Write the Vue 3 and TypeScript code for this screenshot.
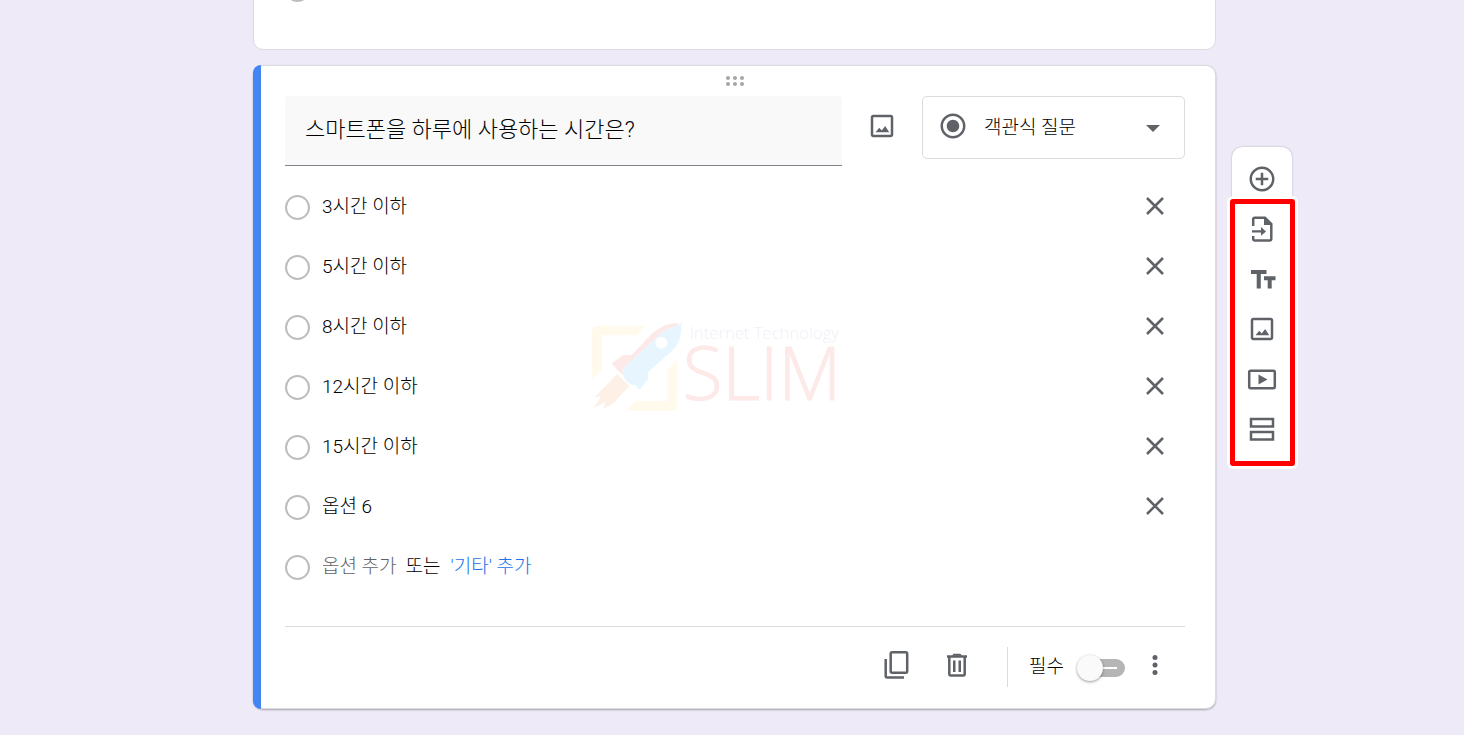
<script setup lang="ts">
import { ref } from 'vue'

interface Option {
  id: number
  text: string
}

const question = ref('스마트폰을 하루에 사용하는 시간은?')
const kind = ref('객관식 질문')
const required = ref(false)
const options = ref<Option[]>([
  { id: 1, text: '3시간 이하' },
  { id: 2, text: '5시간 이하' },
  { id: 3, text: '8시간 이하' },
  { id: 4, text: '12시간 이하' },
  { id: 5, text: '15시간 이하' },
  { id: 6, text: '옵션 6' },
])

function removeOption(id: number): void {
  options.value = options.value.filter((o) => o.id !== id)
}

function addOption(): void {
  const next = Math.max(0, ...options.value.map((o) => o.id)) + 1
  options.value.push({ id: next, text: `옵션 ${next}` })
}
</script>

<template>
  <div class="page">
    <main class="column">
      <section class="card previous">
        <div class="option"><span class="circle"></span></div>
      </section>

      <section class="card active">
        <div class="handle">
          <svg width="20" height="12" viewBox="0 0 20 12">
            <g fill="#a5a6ab">
              <circle cx="3" cy="3" r="2" /><circle cx="10" cy="3" r="2" /><circle cx="17" cy="3" r="2" />
              <circle cx="3" cy="9" r="2" /><circle cx="10" cy="9" r="2" /><circle cx="17" cy="9" r="2" />
            </g>
          </svg>
        </div>

        <div class="head">
          <input v-model="question" class="question" type="text" aria-label="질문" />
          <button class="icon image" type="button" aria-label="이미지 추가">
            <svg width="30" height="30" viewBox="0 0 24 24">
              <path d="M19 5v14H5V5h14m0-2H5c-1.100 0-2 .9-2 2v14c0 1.100.9 2 2 2h14c1.100 0 2-.9 2-2V5c0-1.100-.9-2-2-2zM14.500 12l-2.700 3.500L9.800 13.300 6.800 17h11z" />
            </svg>
          </button>
          <div class="kind">
            <svg class="kind-icon" width="30" height="30" viewBox="0 0 24 24">
              <path d="M12 7c-2.760 0-5 2.240-5 5s2.240 5 5 5 5-2.240 5-5-2.240-5-5-5zm0-5C6.480 2 2 6.480 2 12s4.480 10 10 10 10-4.480 10-10S17.520 2 12 2zm0 18c-4.420 0-8-3.580-8-8s3.580-8 8-8 8 3.580 8 8-3.580 8-8 8z" />
            </svg>
            <select v-model="kind" aria-label="질문 유형">
              <option>객관식 질문</option>
            </select>
            <svg class="kind-arrow" width="14" height="7" viewBox="0 0 14 7"><path d="M0 0h14L7 7z" /></svg>
          </div>
        </div>

        <div class="options">
          <div v-for="o in options" :key="o.id" class="option">
            <span class="circle"></span>
            <input v-model="o.text" class="answer" type="text" :aria-label="`옵션 ${o.id}`" />
            <button class="icon remove" type="button" aria-label="삭제" @click="removeOption(o.id)">
              <svg width="30" height="30" viewBox="0 0 30 30">
                <path class="line" d="M7 7l16 16M23 7L7 23" />
              </svg>
            </button>
          </div>
          <div class="option">
            <span class="circle"></span>
            <button class="add" type="button" @click="addOption">옵션 추가</button>
            <span class="or">또는</span>
            <button class="add other" type="button">'기타' 추가</button>
          </div>
        </div>

        <footer class="footer">
          <button class="icon" type="button" aria-label="복사">
            <svg width="30" height="30" viewBox="0 0 30 30">
              <rect class="line" x="8.700" y="2.200" width="16.500" height="20.500" rx="1.500" />
              <path class="line" d="M3.700 9v17a1.500 1.500 0 0 0 1.500 1.500H22" />
            </svg>
          </button>
          <button class="icon" type="button" aria-label="삭제">
            <svg width="30" height="30" viewBox="0 0 30 30">
              <path class="line" d="M5 6.500h20M7.300 7v17a1.500 1.500 0 0 0 1.500 1.500h12.400a1.500 1.500 0 0 0 1.500-1.500V7" />
              <path d="M11.500 3.800h7l1.500 2h-10zM11 10.500h2.500v11.500H11zM16.500 10.500H19v11.500h-2.500z" />
            </svg>
          </button>
          <span class="divider"></span>
          <label class="required">
            <span>필수</span>
            <input v-model="required" class="switch" type="checkbox" role="switch" />
          </label>
          <button class="icon" type="button" aria-label="더보기">
            <svg width="30" height="30" viewBox="0 0 30 30">
              <circle cx="15" cy="7.500" r="2.500" /><circle cx="15" cy="15" r="2.500" /><circle cx="15" cy="22.500" r="2.500" />
            </svg>
          </button>
        </footer>

        <svg class="mark" width="270" height="110" viewBox="0 0 810 330">
          <path fill="#fffaeb" d="M36 207V66q0-19 19-19H196L170 76H66V178z" />
          <path fill="#fffaeb" d="M291 150V283q0 20-20 20H137L167 273H262V182z" />
          <path fill="#fdf0e6" d="M112 192L148 229 100 280 71 297 76 276 41 294 63 258 42 263z" />
          <path fill="#fce9e8" d="M95 160L130 135H155L215 72Q255 36 294 40V48Q260 52 229 83L128 178V194L113 180z" />
          <path fill="#e6f5fe" d="M309 33L303 45Q307 90 278 121L204 187V207L179 240 165 225H157L138 213 128 194V178L229 83Q260 52 294 48z" />
          <circle fill="#ffffff" cx="244" cy="98" r="18" />
          <text class="mark-small" x="329" y="87">Internet Technology</text>
          <text class="mark-large" x="308" y="269">SLIM</text>
        </svg>
      </section>
    </main>

    <nav class="toolbar" aria-label="도구">
      <button class="icon" type="button" aria-label="질문 추가">
        <svg width="30" height="30" viewBox="0 0 24 24">
          <path d="M13 7h-2v4H7v2h4v4h2v-4h4v-2h-4V7zm-1-5C6.480 2 2 6.480 2 12s4.480 10 10 10 10-4.480 10-10S17.520 2 12 2zm0 18c-4.410 0-8-3.590-8-8s3.590-8 8-8 8 3.590 8 8-3.590 8-8 8z" />
        </svg>
      </button>
      <div class="marked">
        <button class="icon" type="button" aria-label="질문 가져오기">
          <svg width="30" height="30" viewBox="0 0 30 30">
            <path class="line" d="M6.200 12V5.200a1.500 1.500 0 0 1 1.500-1.500H18l6.300 6.300v15a1.500 1.500 0 0 1-1.500 1.500H7.700a1.500 1.500 0 0 1-1.500-1.500V22" />
            <path d="M17 3l8 8h-8zM5 16.200h9v-3.200l5 4.400-5 4.400v-3.200H5z" />
          </svg>
        </button>
        <button class="icon" type="button" aria-label="제목 및 설명 추가">
          <svg width="30" height="30" viewBox="0 0 30 30">
            <path d="M4 6h15.500v4H13.800v14.500H9.700V10H4zM17 12.200h11.500v4h-3.800v8.300h-4v-8.300H17z" />
          </svg>
        </button>
        <button class="icon" type="button" aria-label="이미지 추가">
          <svg width="30" height="30" viewBox="0 0 24 24">
            <path d="M19 5v14H5V5h14m0-2H5c-1.100 0-2 .9-2 2v14c0 1.100.9 2 2 2h14c1.100 0 2-.9 2-2V5c0-1.100-.9-2-2-2zM14.500 12l-2.700 3.500L9.800 13.300 6.800 17h11z" />
          </svg>
        </button>
        <button class="icon" type="button" aria-label="동영상 추가">
          <svg width="30" height="30" viewBox="0 0 30 30">
            <rect class="line" x="2.200" y="6.700" width="25.600" height="17.600" rx="1.500" />
            <path d="M11.500 10.500v10l9-5z" />
          </svg>
        </button>
        <button class="icon" type="button" aria-label="섹션 추가">
          <svg width="30" height="30" viewBox="0 0 30 30">
            <path class="line" d="M4 5h22v7.500H4zM4 18h22v7.500H4z" />
          </svg>
        </button>
      </div>
    </nav>
  </div>
</template>

<style>
body {
  background: #eeeaf8;
}
</style>

<style scoped>
.page {
  display: grid;
  grid-template-columns: 1fr minmax(0, 963px) 1fr;
  padding: 0 0 25px 5px;
  overflow: hidden;
  background: #eeeaf8;
  color: #000;
  font-family: Roboto, 'Noto Sans CJK KR', sans-serif;
  font-size: 19px;
  font-weight: 300;
}

.page *,
.page *::before {
  box-sizing: border-box;
}

input,
select,
button {
  margin: 0;
  padding: 0;
  border: 0;
  border-radius: 0;
  background: none;
  color: inherit;
  font: inherit;
}

.column {
  grid-column: 2;
}

.card {
  position: relative;
  padding: 0 30px 0 31px;
  border: 1px solid #dadce0;
  border-radius: 10px;
  background: #fff;
}

.previous {
  margin-top: -42px;
  padding-bottom: 30px;
}

.active {
  margin-top: 15px;
  box-shadow: 0 1px 2px rgba(0, 0, 0, 0.3);
}

.active::before {
  content: '';
  position: absolute;
  top: -1px;
  bottom: -1px;
  left: -1px;
  width: 8px;
  border-radius: 8px 0 0 8px;
  background: #4285f4;
}

.handle {
  display: flex;
  align-items: center;
  justify-content: center;
  height: 30px;
}

.head {
  display: flex;
  align-items: flex-start;
}

.question {
  flex: 1;
  min-width: 0;
  height: 70px;
  padding: 0 20px 8px;
  border-bottom: 1px solid #80868b;
  border-radius: 4px 4px 0 0;
  background: #f9f9f9;
  font-size: 22px;
}

.icon {
  display: flex;
  flex: none;
  align-items: center;
  justify-content: center;
  width: 60px;
  height: 50px;
}

.icon path,
.icon circle,
.kind path {
  fill: #5f6368;
}

.icon .line {
  fill: none;
  stroke: #5f6368;
  stroke-width: 2.500px;
}

.image {
  width: 80px;
  height: 60px;
}

.kind {
  position: relative;
  width: 263px;
}

.kind select {
  display: block;
  width: 100%;
  height: 63px;
  padding-left: 61px;
  border: 1px solid #dadce0;
  border-radius: 5px;
  appearance: none;
}

.kind-icon {
  position: absolute;
  top: 15px;
  left: 16px;
}

.kind-arrow {
  position: absolute;
  top: 29px;
  right: 25px;
}

.options {
  margin-top: 11px;
}

.option {
  display: flex;
  align-items: center;
  height: 60px;
}

.circle {
  flex: none;
  width: 25px;
  height: 25px;
  margin-right: 12px;
  border: 2px solid #bdbdbd;
  border-radius: 50%;
}

.answer {
  flex: 1;
  min-width: 0;
  padding-bottom: 6px;
}

.remove {
  padding-bottom: 2px;
}

.add,
.or {
  padding-bottom: 6px;
}

.add {
  color: #5f6368;
}

.or {
  margin: 0 10px 0 9px;
}

.other {
  color: #1a73e8;
}

.footer {
  display: flex;
  align-items: center;
  justify-content: flex-end;
  margin-top: 29px;
  padding-bottom: 6px;
  height: 82px;
  border-top: 1px solid #dadce0;
}

.divider {
  width: 1px;
  height: 40px;
  margin: 4px 21px 0 20px;
  background: #dadce0;
}

.required {
  position: relative;
  z-index: 0;
  display: flex;
  align-items: center;
  gap: 13px;
}

.switch {
  position: relative;
  width: 48px;
  height: 26px;
  margin-top: 6px;
  appearance: none;
  background:
    linear-gradient(#fff, #fff) 26px 12px / 14px 2px no-repeat;
}

.switch::before {
  content: '';
  position: absolute;
  z-index: 0;
  top: 0;
  left: 0;
  width: 26px;
  height: 26px;
  border-radius: 50%;
  background: #fafafa;
  box-shadow: 0 1px 3px rgba(0, 0, 0, 0.4);
}

.switch::after {
  content: '';
  position: absolute;
  z-index: -1;
  top: 4px;
  right: 0;
  width: 38px;
  height: 18px;
  border-radius: 9px;
  background: #b5b5b5;
}

.switch:checked::before {
  left: 22px;
}

.mark {
  position: absolute;
  top: 244px;
  left: 50%;
  margin-left: -155px;
  pointer-events: none;
}

.mark-small {
  fill: #f1eff8;
  font-family: 'Open Sans', sans-serif;
  font-size: 50px;
}

.mark-large {
  fill: #fce9e8;
  stroke: #fce9e8;
  stroke-width: 3px;
  font-family: 'Open Sans', sans-serif;
  font-size: 219px;
}

.toolbar {
  grid-column: 3;
  justify-self: start;
  align-self: start;
  width: 60px;
  margin: 147px 0 0 16px;
  padding-top: 7px;
  border-radius: 10px;
  background: #fff;
  box-shadow: 0 0 2px rgba(0, 0, 0, 0.3);
}

.marked {
  margin: -5px -3px 0 -2px;
  padding: 0 0 7px 1px;
  border: 5px solid #f00;
  border-radius: 3px;
  background: #fff;
  box-shadow: 0 0 0 3px #fff;
}

.marked .icon {
  width: 52px;
}
</style>
